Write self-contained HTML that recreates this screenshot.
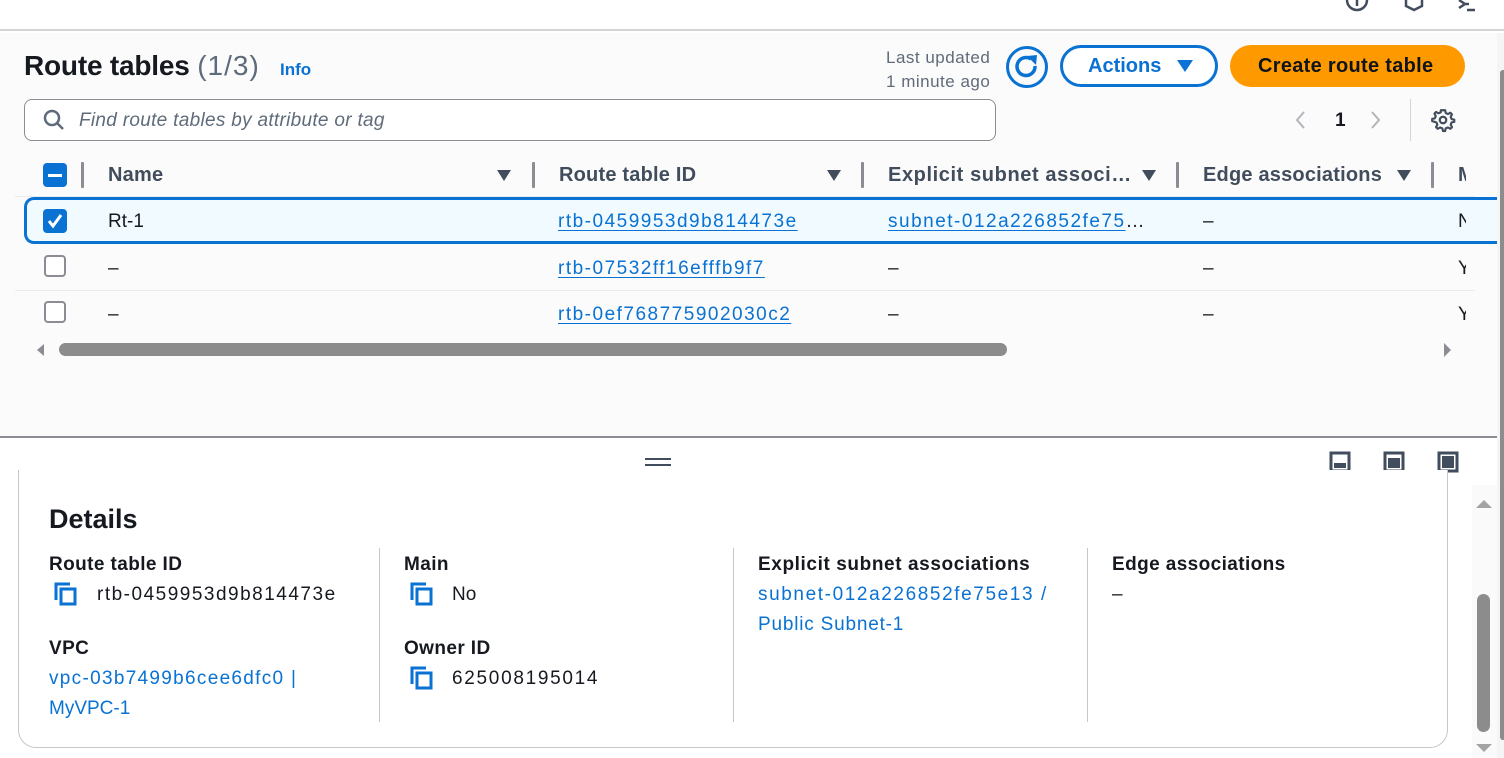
<!DOCTYPE html>
<html><head><meta charset="utf-8"><style>
*{box-sizing:border-box;margin:0;padding:0}
body{width:1504px;height:758px;overflow:hidden;background:#fff;font-family:"Liberation Sans",sans-serif;color:#16191f;position:relative}
.a{position:absolute;white-space:nowrap}
.lnk{color:#0972d3;text-decoration:underline;text-underline-offset:3px}
.blue{color:#0972d3}
.hd{font-weight:bold;font-size:20px;color:#414d5c;letter-spacing:0.2px}
.sep{position:absolute;width:3px;height:26px;background:#8c8c94;border-radius:1px}
.tri{position:absolute;width:0;height:0;border-left:7px solid transparent;border-right:7px solid transparent;border-top:11px solid #414d5c}
.cb{position:absolute;width:22px;height:22px;border:2px solid #8c8c94;border-radius:4px;background:#fff}
.td{font-size:19px;top:0}
.ls{letter-spacing:1.5px}
.lab{font-size:19px;font-weight:bold;letter-spacing:0.4px}
.val{font-size:19px}
</style></head><body>
<div class="a" style="left:0;top:0;width:1504px;height:31px;background:#fff;border-bottom:2px solid #d5d5d8"></div>
<svg class="a" style="left:1344px;top:0" width="160" height="14">
<circle cx="13" cy="0" r="10" fill="none" stroke="#414d5c" stroke-width="2.5"/><line x1="13" y1="-2" x2="13" y2="6" stroke="#414d5c" stroke-width="2.5"/>
<path d="M62 0 L62 6 L70 10 L78 6 L78 0" fill="none" stroke="#414d5c" stroke-width="2.5"/>
<path d="M115 0 L121 4 L115 8 M119 4 L125 4" fill="none" stroke="#414d5c" stroke-width="2.5"/><line x1="123" y1="10" x2="131" y2="10" stroke="#414d5c" stroke-width="2.5"/>
</svg>
<div class="a" style="left:0;top:33px;width:1497px;height:404px;background:#fbfbfb"></div>
<div class="a" style="left:0;top:436px;width:1497px;height:2px;background:#8c8c94"></div>

<div class="a" style="left:24px;top:50px;font-size:28px;font-weight:bold;letter-spacing:-0.2px">Route tables <span style="font-weight:normal;color:#5f6b7a;letter-spacing:1px">(1/3)</span></div>
<div class="a blue" style="left:280px;top:60px;font-size:17px;font-weight:bold">Info</div>

<div class="a" style="left:886px;top:46px;font-size:17px;color:#5f6b7a;text-align:right;line-height:24px;letter-spacing:0.5px">Last updated<br>1 minute ago</div>
<svg class="a" style="left:1005px;top:45px" width="44" height="44"><circle cx="22" cy="22" r="19.5" fill="none" stroke="#0972d3" stroke-width="3"/><path d="M30 21 A9 9 0 1 1 26 14" fill="none" stroke="#0972d3" stroke-width="3.5"/><path d="M22 11 L32 10 L31 20 Z" fill="#0972d3"/></svg>
<div class="a" style="left:1060px;top:45px;width:158px;height:42px;border:3px solid #0972d3;border-radius:21px;background:#fff"></div>
<div class="a blue" style="left:1088px;top:55px;font-size:20px;font-weight:bold">Actions</div>
<div class="a" style="left:1177px;top:60px;border-left:8px solid transparent;border-right:8px solid transparent;border-top:12px solid #0972d3"></div>
<div class="a" style="left:1230px;top:45px;width:235px;height:42px;border-radius:21px;background:#ff9900"></div>
<div class="a" style="left:1258px;top:55px;font-size:20px;font-weight:bold;color:#0f141a;letter-spacing:0.3px">Create route table</div>

<div class="a" style="left:24px;top:99px;width:972px;height:42px;border:1px solid #8c8c94;border-radius:8px;background:#fff"></div>
<svg class="a" style="left:42px;top:108px" width="26" height="26"><circle cx="10" cy="10" r="7" fill="none" stroke="#5f6b7a" stroke-width="2.5"/><line x1="15" y1="15" x2="21" y2="21" stroke="#5f6b7a" stroke-width="2.5"/></svg>
<div class="a" style="left:79px;top:110px;font-size:19px;font-style:italic;color:#5f6b7a;letter-spacing:0.3px">Find route tables by attribute or tag</div>

<svg class="a" style="left:1288px;top:106px" width="110" height="28"><path d="M16 6 L9 14 L16 22" fill="none" stroke="#b4b4bb" stroke-width="2"/><path d="M84 6 L91 14 L84 22" fill="none" stroke="#b4b4bb" stroke-width="2"/></svg>
<div class="a" style="left:1335px;top:110px;font-size:19px;font-weight:bold">1</div>
<div class="a" style="left:1410px;top:99px;width:1px;height:42px;background:#d5d5d8"></div>
<svg class="a" style="left:1430px;top:107px" width="26" height="26" viewBox="0 0 24 24"><path d="M12 3 l2 0 .5 2.5 2 1 2.3-1.2 1.5 1.5-1.2 2.3 .8 2 2.5.6v2l-2.5.6-.8 2 1.2 2.3-1.5 1.5-2.3-1.2-2 .8-.5 2.5h-2l-.6-2.5-2-.8-2.3 1.2-1.5-1.5 1.2-2.3-.8-2L2 13v-2l2.5-.6.8-2-1.2-2.3 1.5-1.5 2.3 1.2 2-.8L10 3z" fill="none" stroke="#414d5c" stroke-width="2" stroke-linejoin="round"/><circle cx="12" cy="12" r="3" fill="none" stroke="#414d5c" stroke-width="2"/></svg>

<div class="a" style="left:43px;top:163px;width:24px;height:24px;border-radius:4px;background:#0972d3"></div>
<div class="a" style="left:48px;top:174px;width:14px;height:3px;background:#fff"></div>
<div class="sep" style="left:81px;top:162px"></div>
<div class="a hd" style="left:108px;top:164px">Name</div>
<div class="tri" style="left:497px;top:170px"></div>
<div class="sep" style="left:532px;top:162px"></div>
<div class="a hd" style="left:559px;top:164px">Route table ID</div>
<div class="tri" style="left:827px;top:170px"></div>
<div class="sep" style="left:861px;top:162px"></div>
<div class="a hd" style="left:888px;top:164px;letter-spacing:0.6px">Explicit subnet associ…</div>
<div class="tri" style="left:1142px;top:170px"></div>
<div class="sep" style="left:1176px;top:162px"></div>
<div class="a hd" style="left:1203px;top:164px">Edge associations</div>
<div class="tri" style="left:1397px;top:170px"></div>
<div class="sep" style="left:1431px;top:162px"></div>
<div class="a hd" style="left:1458px;top:164px;width:8px;overflow:hidden">M</div>
<div class="a" style="left:15px;top:196px;width:1460px;height:1px;background:#e9ebed"></div>

<div class="a" style="left:24px;top:197px;width:1480px;height:47px;background:#f1faff;border:3px solid #0972d3;border-right:none;border-radius:10px 0 0 10px"></div>
<div class="a" style="left:43px;top:209px;width:24px;height:24px;border-radius:4px;background:#0972d3"></div>
<svg class="a" style="left:43px;top:209px" width="24" height="24"><path d="M6 12 L10 17 L18 6" fill="none" stroke="#fff" stroke-width="3"/></svg>
<div class="a td" style="left:108px;top:211px">Rt-1</div>
<div class="a td lnk ls" style="left:558px;top:211px">rtb-0459953d9b814473e</div>
<div class="a td" style="left:888px;top:211px"><span class="lnk ls">subnet-012a226852fe75</span>…</div>
<div class="a td" style="left:1203px;top:211px">–</div>
<div class="a td" style="left:1458px;top:211px;width:8px;overflow:hidden">N</div>

<div class="cb" style="left:44px;top:255px"></div>
<div class="a td" style="left:108px;top:258px">–</div>
<div class="a td lnk ls" style="left:558px;top:258px">rtb-07532ff16efffb9f7</div>
<div class="a td" style="left:888px;top:258px">–</div>
<div class="a td" style="left:1203px;top:258px">–</div>
<div class="a td" style="left:1458px;top:258px;width:8px;overflow:hidden">Y</div>
<div class="a" style="left:15px;top:290px;width:1460px;height:1px;background:#e9ebed"></div>
<div class="cb" style="left:44px;top:301px"></div>
<div class="a td" style="left:108px;top:304px">–</div>
<div class="a td lnk ls" style="left:558px;top:304px">rtb-0ef768775902030c2</div>
<div class="a td" style="left:888px;top:304px">–</div>
<div class="a td" style="left:1203px;top:304px">–</div>
<div class="a td" style="left:1458px;top:304px;width:8px;overflow:hidden">Y</div>

<div class="a" style="left:37px;top:344px;border-top:6px solid transparent;border-bottom:6px solid transparent;border-right:7px solid #8c8c94"></div>
<div class="a" style="left:59px;top:343px;width:948px;height:13px;border-radius:7px;background:#8c8c8c"></div>
<div class="a" style="left:1444px;top:343px;border-top:7px solid transparent;border-bottom:7px solid transparent;border-left:7px solid #8c8c94"></div>

<div class="a" style="left:1497px;top:33px;width:7px;height:725px;background:#f5f5f5"></div>
<div class="a" style="left:1500px;top:70px;width:4px;height:670px;background:#8c8c8c;border-radius:3px 0 0 3px"></div>

<div class="a" style="left:645px;top:458px;width:26px;height:2px;background:#414d5c"></div>
<div class="a" style="left:645px;top:464px;width:26px;height:2px;background:#414d5c"></div>
<svg class="a" style="left:1328px;top:450px" width="135" height="26">
<rect x="3" y="3" width="18" height="18" fill="none" stroke="#414d5c" stroke-width="3"/><rect x="6" y="13" width="12" height="5" fill="#414d5c"/>
<rect x="57" y="3" width="18" height="18" fill="none" stroke="#414d5c" stroke-width="3"/><rect x="60" y="8" width="12" height="10" fill="#414d5c"/>
<rect x="111" y="3" width="18" height="18" fill="none" stroke="#414d5c" stroke-width="3"/><rect x="114" y="6" width="12" height="12" fill="#414d5c"/>
</svg>

<div class="a" style="left:1472px;top:485px;width:25px;height:273px;background:#fafafa"></div>
<div class="a" style="left:1476px;top:500px;border-left:8px solid transparent;border-right:8px solid transparent;border-bottom:8px solid #a3a3a3"></div>
<div class="a" style="left:1477px;top:594px;width:13px;height:138px;border-radius:7px;background:#8c8c8c"></div>
<div class="a" style="left:1476px;top:744px;border-left:8px solid transparent;border-right:8px solid transparent;border-top:8px solid #a3a3a3"></div>

<div class="a" style="left:18px;top:470px;width:1430px;height:278px;border:1px solid #c6c6cd;border-top:none;border-radius:0 0 18px 18px;background:#fff"></div>
<div class="a" style="left:49px;top:504px;font-size:27px;font-weight:bold">Details</div>
<div class="a" style="left:379px;top:548px;width:1px;height:174px;background:#c6c6cd"></div>
<div class="a" style="left:733px;top:548px;width:1px;height:174px;background:#c6c6cd"></div>
<div class="a" style="left:1087px;top:548px;width:1px;height:174px;background:#c6c6cd"></div>

<svg width="0" height="0" style="position:absolute"><defs><g id="cp"><path d="M2 18 V2 H16" fill="none" stroke="#0972d3" stroke-width="3"/><rect x="7" y="7" width="14" height="15" fill="none" stroke="#0972d3" stroke-width="3"/></g></defs></svg>

<div class="a lab" style="left:49px;top:554px">Route table ID</div>
<svg class="a" style="left:54px;top:582px" width="26" height="26"><use href="#cp"/></svg>
<div class="a val ls" style="left:97px;top:584px">rtb-0459953d9b814473e</div>
<div class="a lab" style="left:49px;top:638px">VPC</div>
<div class="a val blue" style="left:49px;top:668px;letter-spacing:1.3px">vpc-03b7499b6cee6dfc0 |</div>
<div class="a val blue" style="left:49px;top:698px">MyVPC-1</div>

<div class="a lab" style="left:404px;top:554px">Main</div>
<svg class="a" style="left:410px;top:582px" width="26" height="26"><use href="#cp"/></svg>
<div class="a val" style="left:452px;top:584px">No</div>
<div class="a lab" style="left:404px;top:638px">Owner ID</div>
<svg class="a" style="left:410px;top:666px" width="26" height="26"><use href="#cp"/></svg>
<div class="a val" style="left:452px;top:668px;letter-spacing:1.7px">625008195014</div>

<div class="a lab" style="left:758px;top:554px;letter-spacing:0.6px">Explicit subnet associations</div>
<div class="a val blue" style="left:758px;top:584px;letter-spacing:1.6px">subnet-012a226852fe75e13 /</div>
<div class="a val blue" style="left:758px;top:614px;letter-spacing:0.8px">Public Subnet-1</div>

<div class="a lab" style="left:1112px;top:554px">Edge associations</div>
<div class="a val" style="left:1112px;top:584px">–</div>
</body></html>
